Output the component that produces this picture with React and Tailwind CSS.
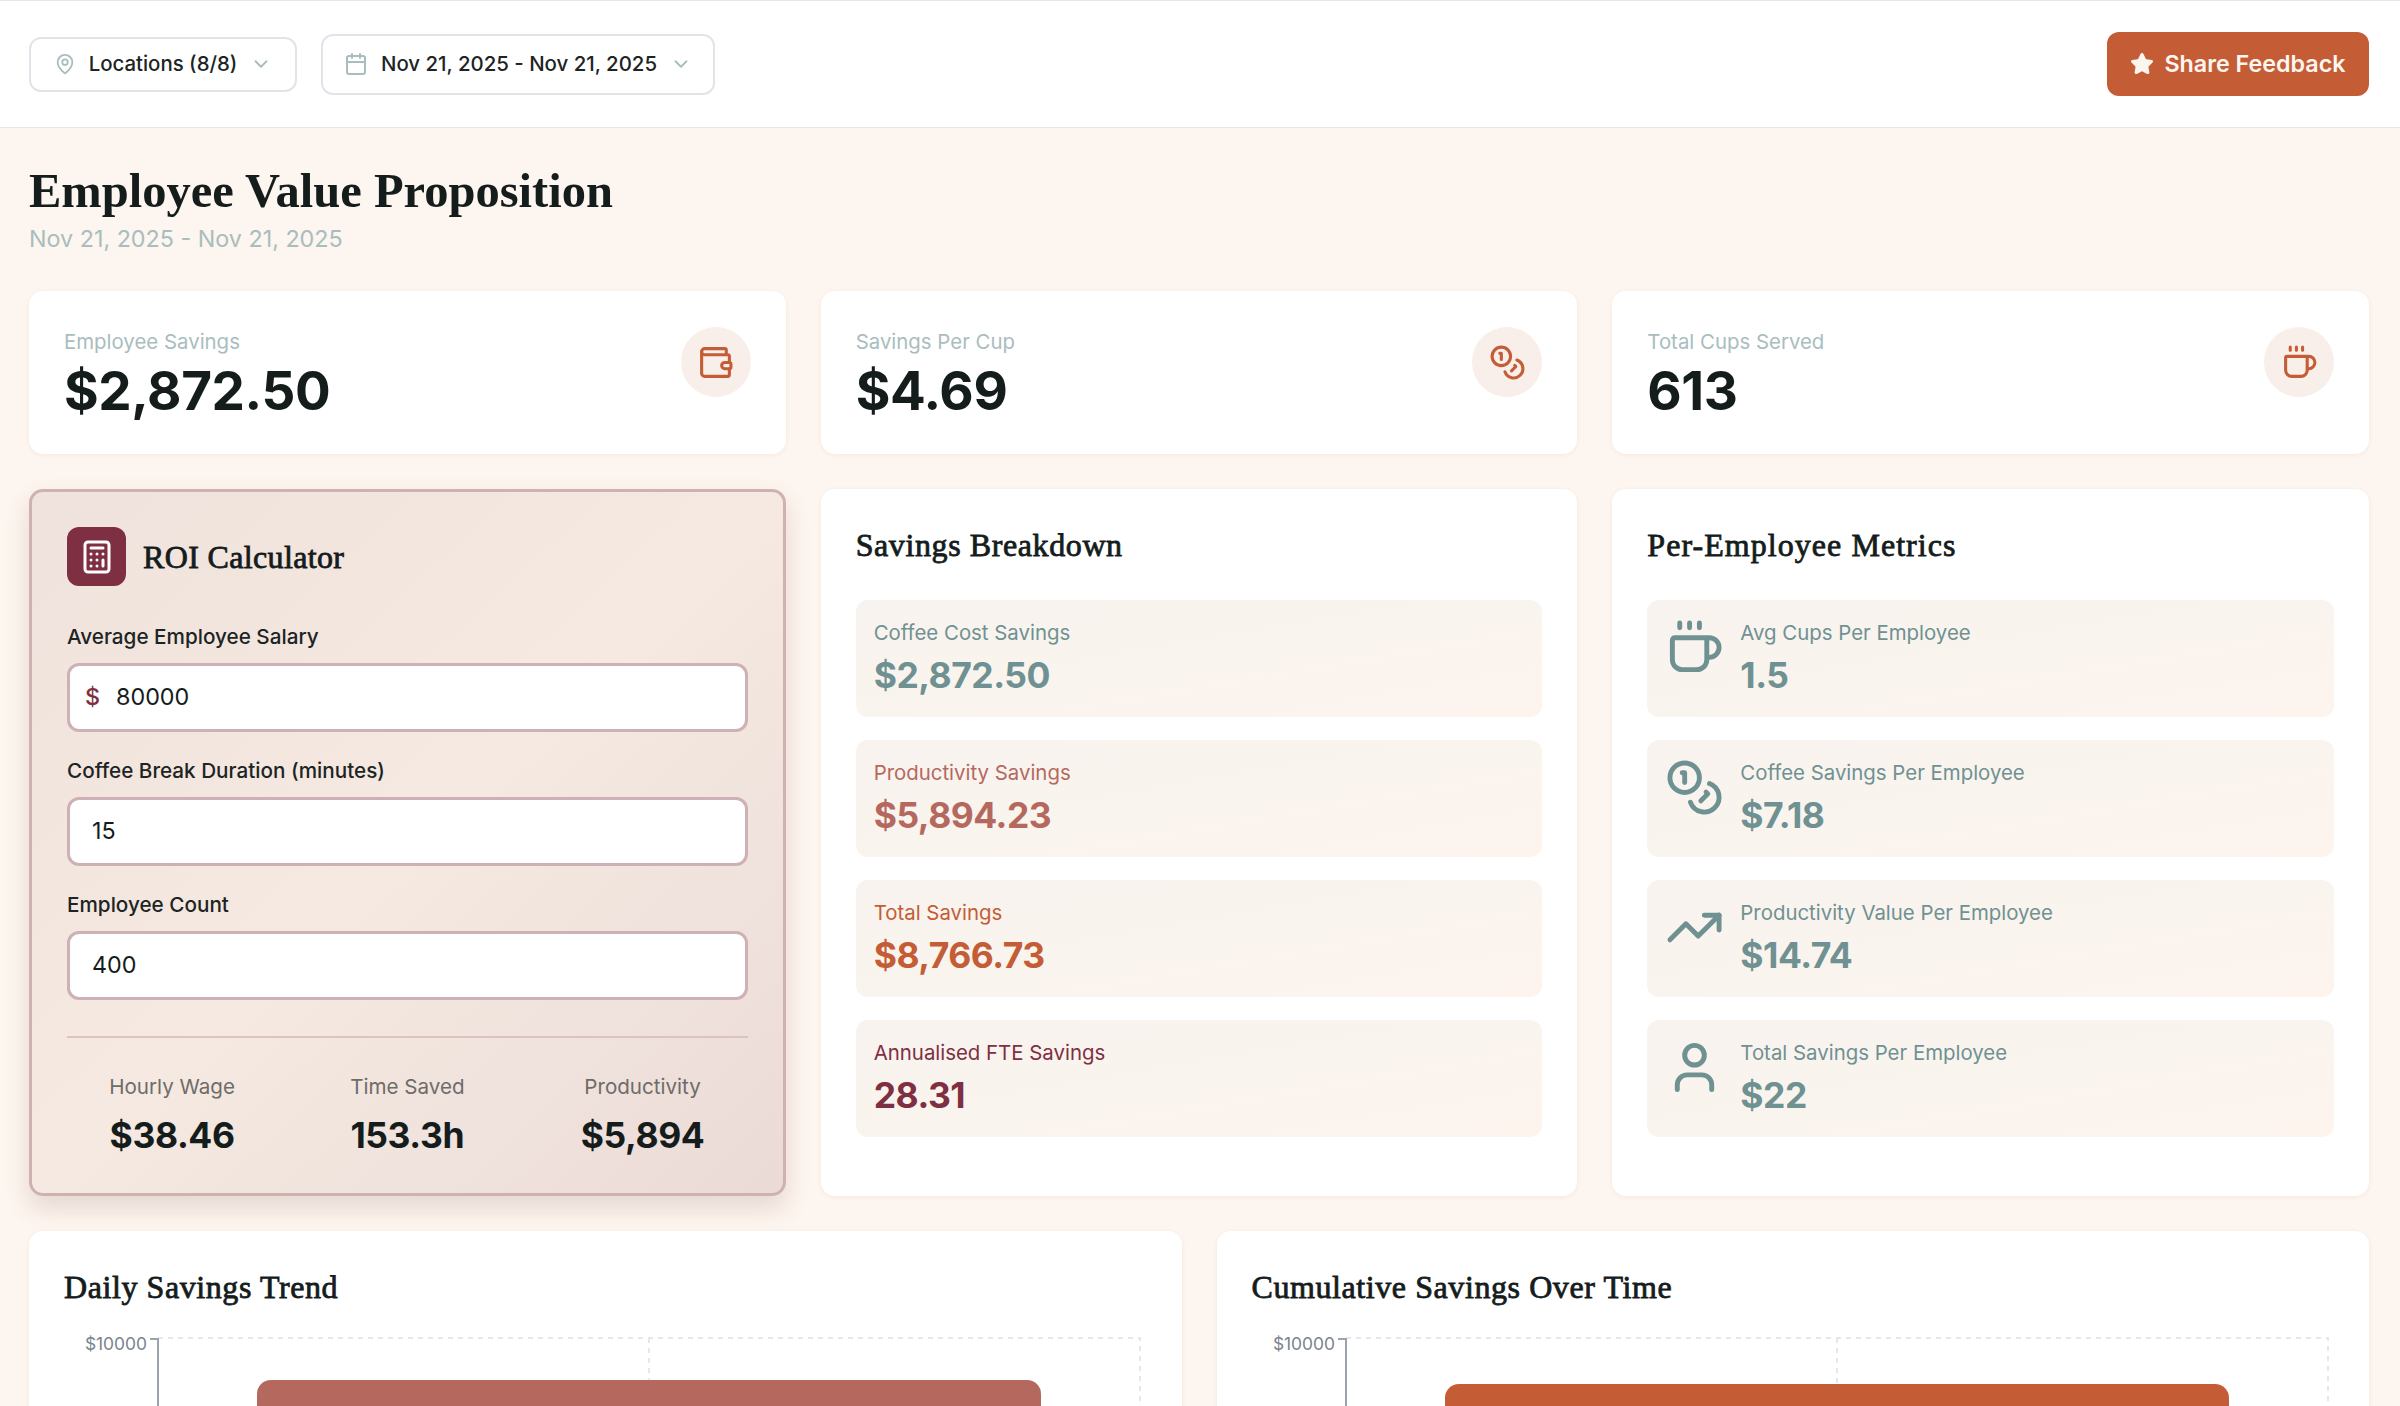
import React from "react";
import { MapPin, ChevronDown, Calendar, Star, Wallet, Coins, Coffee, Calculator, TrendingUp, User } from "lucide-react";

const SANS = "font-['Inter',sans-serif]";
const SERIF = "font-['Liberation_Serif',serif]";
const SECTION_TITLE = `text-[32px] leading-[42px] font-normal [-webkit-text-stroke:0.8px_#151c1c] text-[#151c1c] ${SERIF}`;

function Stat({ label, value, Icon }) {
  return (
    <div className="h-[163px] rounded-[14px] bg-white shadow-[0_1px_4px_rgba(120,90,70,0.08)] px-[35px] pt-[36px] flex justify-between items-start">
      <div>
        <div className="text-[20.4px] leading-[30px] text-[#a9bdbe]">{label}</div>
        <div className="mt-[1px] text-[53px] leading-[66px] font-bold tracking-[-0.4px] text-[#151c1c]">{value}</div>
      </div>
      <div className="w-[70px] h-[70px] rounded-full bg-[#f8eeea] flex items-center justify-center">
        <Icon className="w-[37px] h-[37px] text-[#c45d35]" strokeWidth={2} />
      </div>
    </div>
  );
}

function Item({ label, value, labelColor, valueColor, Icon }) {
  return (
    <div className="h-[117px] rounded-[12px] bg-gradient-to-br from-[#f8f3ee] via-[#faf4ef] to-[#fdf4ee] px-[18px] pt-[18px] flex items-start">
      {Icon && <Icon className="w-[59px] h-[59px] mr-[16px] shrink-0 text-[#6f9192]" strokeWidth={2} />}
      <div>
        <div className={`text-[20.4px] leading-[30px] ${labelColor}`}>{label}</div>
        <div className={`mt-[6px] text-[35.5px] leading-[44px] font-bold tracking-[-0.5px] ${valueColor}`}>{value}</div>
      </div>
    </div>
  );
}

function Field({ label, value, prefix, className }) {
  return (
    <div className={className}>
      <label className="block text-[20.7px] leading-[30px] font-medium text-[#1c2424]">{label}</label>
      <div className={`mt-[11px] h-[69px] rounded-[12px] border-[3px] border-[#cdb1b7] bg-white flex items-center text-[23.3px] ${prefix ? "pl-[15px]" : "pl-[22px]"}`}>
        {prefix && <span className="text-[#7f2f42] font-medium mr-[16px]">{prefix}</span>}
        <input readOnly value={value} className="w-full bg-transparent outline-none text-[#151c1c]" />
      </div>
    </div>
  );
}

function Mini({ label, value }) {
  return (
    <div className="text-center">
      <div className="text-[20.6px] leading-[30px] text-[#6e6c69]">{label}</div>
      <div className="mt-[12px] text-[35.5px] leading-[44px] font-bold tracking-[-0.4px] text-[#151c1c]">{value}</div>
    </div>
  );
}

function Chart({ title, barColor, barTop }) {
  return (
    <div className="h-[300px] rounded-[14px] bg-white shadow-[0_1px_4px_rgba(120,90,70,0.08)] pt-[35px]">
      <h3 className={`pl-[35px] tracking-[0.58px] ${SECTION_TITLE}`}>{title}</h3>
      <svg viewBox="0 0 1152.5 180" className="mt-[18px] block w-full h-[180px]">
        <path d="M129 12H1111V200" fill="none" stroke="#e5e7eb" strokeWidth="2" strokeDasharray="5 5" />
        <path d="M620 12V200" fill="none" stroke="#e5e7eb" strokeWidth="2" strokeDasharray="5 5" />
        <path d="M121 13H129V200" fill="none" stroke="#9ca3af" strokeWidth="2" />
        <text x="118" y="24" textAnchor="end" fontSize="17.4" fill="#7b838e" fontFamily="Inter, sans-serif">$10000</text>
        <path d={`M228 200V${barTop + 14}a14 14 0 0 1 14 -14H998a14 14 0 0 1 14 14V200Z`} fill={barColor} />
      </svg>
    </div>
  );
}

export default function App() {
  return (
    <div className={`h-screen overflow-hidden bg-[#fdf5ef] ${SANS}`}>
      <header className="h-[128px] bg-white border-y border-[#e6e8e8] pl-[29px] pr-[31px] flex items-center justify-between">
        <div className="flex items-center gap-[24px]">
          <button className="h-[55px] w-[268px] rounded-[12px] border-2 border-[#e1e4e8] bg-white flex items-center justify-center gap-[13px] text-[20.4px] font-medium text-[#1c2424]">
            <MapPin className="w-[22px] h-[22px] text-[#a9bdbe]" strokeWidth={2} />
            <span>Locations (8/8)</span>
            <ChevronDown className="w-[22px] h-[22px] text-[#a9bdbe]" strokeWidth={2} />
          </button>
          <button className="h-[61px] w-[394px] rounded-[12px] border-2 border-[#e1e4e8] bg-white flex items-center justify-center gap-[13px] text-[20.4px] font-medium text-[#1c2424]">
            <Calendar className="w-[24px] h-[24px] text-[#a9bdbe]" strokeWidth={2} />
            <span>Nov 21, 2025 - Nov 21, 2025</span>
            <ChevronDown className="w-[22px] h-[22px] text-[#a9bdbe]" strokeWidth={2} />
          </button>
        </div>
        <button className="h-[64px] w-[262px] rounded-[12px] bg-[#c45d35] flex items-center justify-center gap-[10px] text-[23.3px] font-semibold text-[#fdf5ef]">
          <Star className="w-[24px] h-[24px] fill-current" strokeWidth={2} />
          <span>Share Feedback</span>
        </button>
      </header>

      <main className="pl-[29px] pr-[31px] pt-[33px]">
        <h1 className={`text-[48.5px] leading-[60px] font-bold text-[#151c1c] ${SERIF}`}>Employee Value Proposition</h1>
        <p className="text-[23.3px] leading-[36px] text-[#a9bdbe]">Nov 21, 2025 - Nov 21, 2025</p>

        <div className="mt-[34px] grid grid-cols-3 gap-x-[35px]">
          <Stat label="Employee Savings" value="$2,872.50" Icon={Wallet} />
          <Stat label="Savings Per Cup" value="$4.69" Icon={Coins} />
          <Stat label="Total Cups Served" value="613" Icon={Coffee} />
        </div>

        <div className="mt-[35px] grid grid-cols-3 gap-x-[35px]">
          <section className="h-[707px] rounded-[14px] border-[3px] border-[#cfb1b3] bg-gradient-to-br from-[#f0e2dc] via-[#f5e9e1] to-[#ebdbd7] shadow-[0_12px_24px_rgba(120,90,70,0.18)] px-[35px] pt-[35px]">
            <div className="flex items-center">
              <div className="w-[59px] h-[59px] rounded-[12px] bg-[#7f2f42] flex items-center justify-center">
                <Calculator className="w-[36px] h-[36px] text-white" strokeWidth={2} />
              </div>
              <h3 className={`ml-[17px] tracking-[0.35px] ${SECTION_TITLE}`}>ROI Calculator</h3>
            </div>
            <Field className="mt-[36px]" label="Average Employee Salary" value="80000" prefix="$" />
            <Field className="mt-[24px]" label="Coffee Break Duration (minutes)" value="15" />
            <Field className="mt-[24px]" label="Employee Count" value="400" />
            <div className="mt-[36px] border-t-2 border-[#dcc3c3] pt-[34px] grid grid-cols-3 gap-x-[25px]">
              <Mini label="Hourly Wage" value="$38.46" />
              <Mini label="Time Saved" value="153.3h" />
              <Mini label="Productivity" value="$5,894" />
            </div>
          </section>

          <section className="h-[707px] rounded-[14px] bg-white shadow-[0_1px_4px_rgba(120,90,70,0.08)] px-[35px] pt-[35px]">
            <h3 className={`tracking-[0.6px] ${SECTION_TITLE}`}>Savings Breakdown</h3>
            <div className="mt-[34px] flex flex-col gap-[23px]">
              <Item label="Coffee Cost Savings" value="$2,872.50" labelColor="text-[#6f9192]" valueColor="text-[#6f9192]" />
              <Item label="Productivity Savings" value="$5,894.23" labelColor="text-[#b5695e]" valueColor="text-[#b5695e]" />
              <Item label="Total Savings" value="$8,766.73" labelColor="text-[#c45d35]" valueColor="text-[#c45d35]" />
              <Item label="Annualised FTE Savings" value="28.31" labelColor="text-[#7f2f42]" valueColor="text-[#7f2f42]" />
            </div>
          </section>

          <section className="h-[707px] rounded-[14px] bg-white shadow-[0_1px_4px_rgba(120,90,70,0.08)] px-[35px] pt-[35px]">
            <h3 className={`tracking-[1.05px] ${SECTION_TITLE}`}>Per-Employee Metrics</h3>
            <div className="mt-[34px] flex flex-col gap-[23px]">
              <Item Icon={Coffee} label="Avg Cups Per Employee" value="1.5" labelColor="text-[#6f9192]" valueColor="text-[#6f9192]" />
              <Item Icon={Coins} label="Coffee Savings Per Employee" value="$7.18" labelColor="text-[#6f9192]" valueColor="text-[#6f9192]" />
              <Item Icon={TrendingUp} label="Productivity Value Per Employee" value="$14.74" labelColor="text-[#6f9192]" valueColor="text-[#6f9192]" />
              <Item Icon={User} label="Total Savings Per Employee" value="$22" labelColor="text-[#6f9192]" valueColor="text-[#6f9192]" />
            </div>
          </section>
        </div>

        <div className="mt-[35px] grid grid-cols-2 gap-x-[35px]">
          <Chart title="Daily Savings Trend" barColor="#b5695e" barTop={54} />
          <Chart title="Cumulative Savings Over Time" barColor="#c45d35" barTop={58} />
        </div>
      </main>
    </div>
  );
}
